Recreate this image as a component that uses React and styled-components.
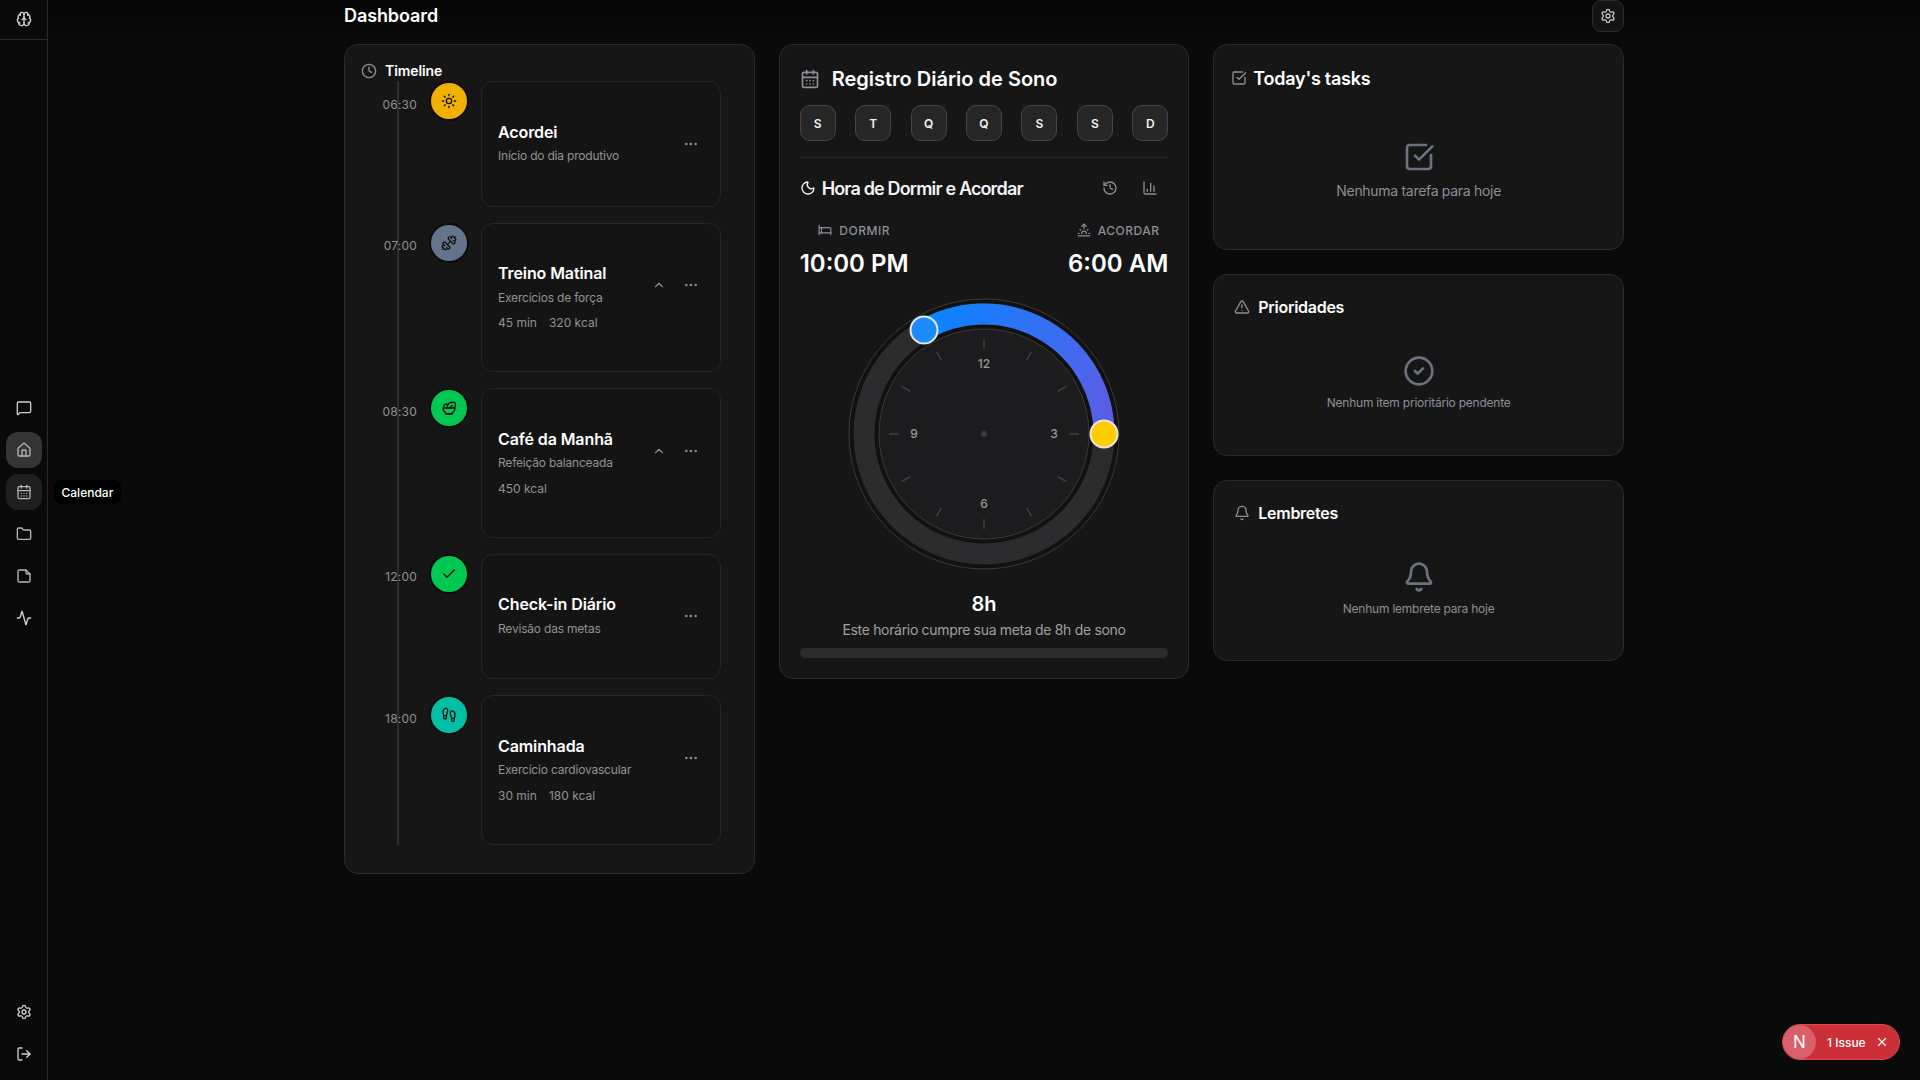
import React from 'react'
import styled, { createGlobalStyle } from 'styled-components'
import {
  Activity, Bed, Bell, Brain, CalendarDays, ChartColumn, Check, ChevronUp, CircleCheck, Clock,
  Dumbbell, Ellipsis, Folder, Footprints, History, House, LogOut, MessageSquare, Moon, Salad,
  Settings, SquareCheckBig, Sun, Sunrise, TriangleAlert, X,
} from 'lucide-react'

const GlobalStyle = createGlobalStyle`
  html, body { margin: 0; padding: 0; background: #0a0a0a; }
  body { font-family: Inter, "Liberation Sans", sans-serif; color: #fff; }
  * { box-sizing: border-box; }
`

const Shell = styled.div`
  display: flex;
  height: 1080px;
  overflow: hidden;
  background: #0a0a0a;
`

const Sidebar = styled.aside`
  flex: 0 0 48px;
  display: flex;
  flex-direction: column;
  align-items: center;
  border-right: 1px solid #2a2a2a;
`

const LogoBox = styled.div`
  width: 47px;
  height: 40px;
  flex: none;
  display: flex;
  align-items: center;
  justify-content: center;
  padding-bottom: 2px;
  border-bottom: 1px solid #2a2a2a;
  color: #d4d4d4;
`

const NavGroup = styled.nav`
  flex: ${p => (p.$grow ? 1 : 'none')};
  display: flex;
  flex-direction: column;
  justify-content: center;
  gap: 6px;
  padding: ${p => (p.$grow ? 0 : '8px 0')};
`

const NavItem = styled.div`
  position: relative;
  width: 36px;
  height: 36px;
  display: flex;
  align-items: center;
  justify-content: center;
  border-radius: 12px;
  color: ${p => (p.$state ? '#b5b5b5' : '#cfcfcf')};
  background: ${p => (p.$state === 'active' ? '#353535' : p.$state === 'hover' ? '#1f1f1f' : 'transparent')};
`

const Tooltip = styled.div`
  position: absolute;
  left: 48px;
  top: 6px;
  height: 24px;
  padding: 0 8px;
  display: flex;
  align-items: center;
  border-radius: 7px;
  background: #000;
  color: #fff;
  font-size: 12px;
  font-weight: 500;
  white-space: nowrap;
`

const Main = styled.main`
  flex: 1;
  display: flex;
  justify-content: center;
  background: linear-gradient(#050505, #0a0a0a 44px);
`

const Content = styled.div`
  width: 1280px;
`

const TopBar = styled.header`
  height: 32px;
  margin-bottom: 12px;
  display: flex;
  align-items: center;
  justify-content: space-between;
`

const PageTitle = styled.h1`
  margin: 0;
  font-size: 18px;
  line-height: 32px;
  font-weight: 600;
  letter-spacing: -0.1px;
`

const SettingsButton = styled.button`
  width: 32px;
  height: 32px;
  padding: 0;
  display: flex;
  align-items: center;
  justify-content: center;
  background: #141414;
  border: 1px solid #2a2a2a;
  border-radius: 9px;
  color: #c8c8c8;
`

const Columns = styled.div`
  display: grid;
  grid-template-columns: repeat(3, 1fr);
  gap: 24px;
  align-items: start;
`

const Stack = styled.div`
  display: flex;
  flex-direction: column;
  gap: 24px;
`

const Panel = styled.section`
  background: #161616;
  border: 1px solid #2a2a2a;
  border-radius: 14px;
  padding: ${p => p.$padding || '20px'};
`

const TimelineHead = styled.div`
  height: 20px;
  display: flex;
  align-items: center;
  gap: 8px;
  color: #8b8f98;
  font-size: 14px;
  line-height: 20px;
  font-weight: 600;
  letter-spacing: -0.1px;
  & > span { color: #fff; }
`

const TimelineList = styled.div`
  position: relative;
  display: flex;
  flex-direction: column;
  gap: 16px;
`

const Rail = styled.div`
  position: absolute;
  left: 36px;
  top: 0;
  bottom: 0;
  width: 2px;
  background: #2e2e2e;
`

const Row = styled.div`
  display: flex;
  align-items: flex-start;
`

const Time = styled.div`
  position: relative;
  width: 56px;
  margin-top: 15.6px;
  text-align: right;
  font-size: 12px;
  line-height: 16px;
  letter-spacing: 0.2px;
  color: #929292;
`

const Dot = styled.div`
  flex: none;
  width: 36px;
  height: 36px;
  margin: 2px 14px 0;
  display: flex;
  align-items: center;
  justify-content: center;
  border-radius: 50%;
  background: ${p => p.$color};
  box-shadow: 0 0 0 2px #0d0d0d;
  color: #111;
`

const ItemCard = styled.article`
  width: 240px;
  display: flex;
  flex-direction: column;
  padding: 37.75px 16px;
  background: #141414;
  border: 1px solid #262626;
  border-radius: 12px;
`

const ItemTop = styled.div`
  display: flex;
  align-items: center;
  justify-content: space-between;
`

const ItemText = styled.div`
  padding-bottom: 3.5px;
`

const ItemTitle = styled.div`
  font-size: 16px;
  line-height: 24px;
  font-weight: 600;
  letter-spacing: -0.1px;
`

const ItemSub = styled.div`
  margin-top: 4.5px;
  font-size: 12px;
  line-height: 16px;
  letter-spacing: -0.2px;
  color: #929292;
`

const Meta = styled.div`
  margin: 6px 0 2px;
  display: flex;
  gap: 12px;
  font-size: 12px;
  line-height: 16px;
  color: #929292;
`

const Actions = styled.div`
  display: flex;
  align-items: center;
  gap: 17px;
  padding-right: 5px;
  color: #8a8a8a;
`

const SleepHead = styled.div`
  height: 28px;
  display: flex;
  align-items: center;
  gap: 12px;
  color: #8b8f98;
  & > h2 {
    margin: 0;
    color: #fff;
    font-size: 20px;
    font-weight: 600;
  }
`

const Days = styled.div`
  display: flex;
  justify-content: space-between;
  margin-top: 12px;
  padding-bottom: 16px;
  border-bottom: 1px solid #262626;
`

const Day = styled.div`
  width: 36px;
  height: 36px;
  display: flex;
  align-items: center;
  justify-content: center;
  background: #262626;
  border: 1px solid #454545;
  border-radius: 10px;
  font-size: 12px;
  font-weight: 600;
  color: #f2f2f2;
`

const SubHead = styled.div`
  height: 32px;
  margin-top: 14px;
  display: flex;
  align-items: center;
  justify-content: space-between;
`

const SubTitle = styled.div`
  display: flex;
  align-items: center;
  gap: 6px;
  font-size: 18px;
  font-weight: 600;
  letter-spacing: -0.85px;
  color: #f4f4f4;
`

const IconButtons = styled.div`
  display: flex;
  gap: 8px;
  padding-right: 2px;
  color: #8e8e8e;
  & > span {
    width: 32px;
    height: 32px;
    display: flex;
    align-items: center;
    justify-content: center;
  }
`

const TimesRow = styled.div`
  display: flex;
  justify-content: space-between;
  margin-top: 16px;
`

const TimeBlock = styled.div`
  display: flex;
  flex-direction: column;
  align-items: center;
  gap: 8px;
`

const TimeLabel = styled.div`
  height: 20px;
  display: flex;
  align-items: center;
  gap: 7px;
  font-size: 12px;
  font-weight: 500;
  letter-spacing: 0.5px;
  color: #8b8f98;
`

const TimeValue = styled.div`
  font-size: 24px;
  line-height: 32px;
  font-weight: 600;
`

const ClockFace = styled.svg`
  display: block;
  margin: 14px auto 0;
`

const Duration = styled.div`
  margin-top: 16px;
  text-align: center;
  font-size: 20px;
  line-height: 28px;
  font-weight: 600;
`

const DurationNote = styled.div`
  margin-top: 2px;
  text-align: center;
  font-size: 14px;
  line-height: 20px;
  letter-spacing: -0.32px;
  color: #a0a0a0;
`

const Progress = styled.div`
  height: 10px;
  margin-top: 8px;
  border-radius: 5px;
  background: #2c2c2e;
`

const CardHead = styled.div`
  display: flex;
  align-items: center;
  gap: ${p => (p.$large ? '6px' : '8px')};
  height: ${p => (p.$large ? '28px' : '24px')};
  color: #8b8f98;
  & > h3 {
    margin: 0;
    color: #fff;
    font-size: ${p => (p.$large ? '18px' : '16px')};
    font-weight: 600;
    letter-spacing: ${p => (p.$large ? '-0.25px' : '-0.28px')};
  }
`

const Empty = styled.div`
  display: flex;
  flex-direction: column;
  align-items: center;
  gap: 8px;
  padding: ${p => (p.$large ? '49px 0 28px' : '36px 0 23.5px')};
  color: #6b7280;
  & > p {
    margin: 0;
    color: #8b8f98;
    font-size: ${p => (p.$large ? '14px' : '12px')};
    line-height: ${p => (p.$large ? '20px' : '16px')};
    letter-spacing: ${p => (p.$large ? '-0.3px' : '-0.23px')};
  }
`

const IssueBadge = styled.div`
  position: fixed;
  right: 20px;
  bottom: 20px;
  width: 118px;
  height: 36px;
  display: flex;
  align-items: center;
  background: #cc2f37;
  border: 1px solid #dd4a50;
  border-radius: 18px;
  font-size: 12px;
  font-weight: 500;
  color: #fff;
`

const IssueLogo = styled.span`
  width: 33px;
  height: 34px;
  margin-right: 11px;
  display: flex;
  align-items: center;
  justify-content: center;
  border-radius: 50%;
  background: #d7606a;
  font-size: 17px;
  font-weight: 400;
`

const IssueClose = styled.span`
  display: flex;
  margin-left: 9px;
`

const FoldedFile = () => (
  <svg width="16" height="16" viewBox="0 0 24 24" fill="none" stroke="currentColor" strokeWidth="2" strokeLinecap="round" strokeLinejoin="round">
    <path d="M5 3h10l6 6v10a2 2 0 0 1-2 2H5a2 2 0 0 1-2-2V5a2 2 0 0 1 2-2z" />
    <path d="M15 3v4a2 2 0 0 0 2 2h4" />
  </svg>
)

const timeline = [
  { time: '06:30', color: '#f0b000', Icon: Sun, title: 'Acordei', sub: 'Início do dia produtivo' },
  { time: '07:00', color: '#64748b', Icon: Dumbbell, title: 'Treino Matinal', sub: 'Exercícios de força', meta: ['45 min', '320 kcal'], open: true },
  { time: '08:30', color: '#00c853', Icon: Salad, title: 'Café da Manhã', sub: 'Refeição balanceada', meta: ['450 kcal'], open: true },
  { time: '12:00', color: '#00c853', Icon: Check, title: 'Check-in Diário', sub: 'Revisão das metas' },
  { time: '18:00', color: '#00bfa5', Icon: Footprints, title: 'Caminhada', sub: 'Exercício cardiovascular', meta: ['30 min', '180 kcal'] },
]

const hours = Array.from({ length: 12 }, (_, i) => i)

function SleepClock() {
  return (
    <ClockFace width="280" height="280" viewBox="0 0 280 280">
      <defs>
        <linearGradient id="sleepArc" x1="80" y1="36" x2="260" y2="140" gradientUnits="userSpaceOnUse">
          <stop offset="0" stopColor="#0a84ff" />
          <stop offset="1" stopColor="#5e5ce6" />
        </linearGradient>
      </defs>
      <circle cx="140" cy="140" r="135" fill="#111" stroke="#3a3a3a" />
      <circle cx="140" cy="140" r="120" fill="none" stroke="#2c2c2e" strokeWidth="21" />
      <circle cx="140" cy="140" r="105" fill="#1c1c1e" stroke="#3a3a3a" />
      {hours.map(h => {
        const a = (h * Math.PI) / 6
        return (
          <line
            key={h}
            x1={140 + 85 * Math.sin(a)}
            y1={140 - 85 * Math.cos(a)}
            x2={140 + 95 * Math.sin(a)}
            y2={140 - 95 * Math.cos(a)}
            stroke="#3f3f41"
            strokeWidth="1.5"
          />
        )
      })}
      <g fill="#9a9a9a" fontSize="12" fontWeight="500" textAnchor="middle" fontFamily="Inter, sans-serif">
        <text x="140" y="74">12</text>
        <text x="210" y="144">3</text>
        <text x="140" y="214">6</text>
        <text x="70" y="144">9</text>
      </g>
      <circle cx="140" cy="140" r="3" fill="#38383a" />
      <path d="M80 36.1A120 120 0 0 1 260 140" fill="none" stroke="url(#sleepArc)" strokeWidth="21" />
      <circle cx="80" cy="36.1" r="13.5" fill="#1a8cff" stroke="#e8e8e8" strokeWidth="2" />
      <circle cx="260" cy="140" r="13.5" fill="#ffcc00" stroke="#e8e8e8" strokeWidth="2" />
    </ClockFace>
  )
}

export default function App() {
  return (
    <Shell>
      <GlobalStyle />
      <Sidebar>
        <LogoBox><Brain size={16} /></LogoBox>
        <NavGroup $grow>
          <NavItem><MessageSquare size={16} /></NavItem>
          <NavItem $state="active"><House size={16} /></NavItem>
          <NavItem $state="hover">
            <CalendarDays size={16} />
            <Tooltip>Calendar</Tooltip>
          </NavItem>
          <NavItem $state="idle"><Folder size={16} /></NavItem>
          <NavItem $state="idle"><FoldedFile /></NavItem>
          <NavItem><Activity size={16} /></NavItem>
        </NavGroup>
        <NavGroup>
          <NavItem><Settings size={16} /></NavItem>
          <NavItem><LogOut size={16} /></NavItem>
        </NavGroup>
      </Sidebar>

      <Main>
        <Content>
          <TopBar>
            <PageTitle>Dashboard</PageTitle>
            <SettingsButton><Settings size={16} /></SettingsButton>
          </TopBar>

          <Columns>
            <Panel $padding="16px 16px 28px">
              <TimelineHead><Clock size={16} /><span>Timeline</span></TimelineHead>
              <TimelineList>
                <Rail />
                {timeline.map(item => (
                  <Row key={item.time}>
                    <Time>{item.time}</Time>
                    <Dot $color={item.color}><item.Icon size={16} /></Dot>
                    <ItemCard>
                      <ItemTop>
                        <ItemText>
                          <ItemTitle>{item.title}</ItemTitle>
                          <ItemSub>{item.sub}</ItemSub>
                        </ItemText>
                        <Actions>
                          {item.open && <ChevronUp size={14} />}
                          <Ellipsis size={16} />
                        </Actions>
                      </ItemTop>
                      {item.meta && (
                        <Meta>{item.meta.map(m => <span key={m}>{m}</span>)}</Meta>
                      )}
                    </ItemCard>
                  </Row>
                ))}
              </TimelineList>
            </Panel>

            <Panel>
              <SleepHead><CalendarDays size={20} /><h2>Registro Diário de Sono</h2></SleepHead>
              <Days>
                {['S', 'T', 'Q', 'Q', 'S', 'S', 'D'].map((d, i) => <Day key={i}>{d}</Day>)}
              </Days>
              <SubHead>
                <SubTitle><Moon size={16} />Hora de Dormir e Acordar</SubTitle>
                <IconButtons>
                  <span><History size={16} /></span>
                  <span><ChartColumn size={16} /></span>
                </IconButtons>
              </SubHead>
              <TimesRow>
                <TimeBlock>
                  <TimeLabel><Bed size={14} />DORMIR</TimeLabel>
                  <TimeValue>10:00 PM</TimeValue>
                </TimeBlock>
                <TimeBlock>
                  <TimeLabel><Sunrise size={14} />ACORDAR</TimeLabel>
                  <TimeValue>6:00 AM</TimeValue>
                </TimeBlock>
              </TimesRow>
              <SleepClock />
              <Duration>8h</Duration>
              <DurationNote>Este horário cumpre sua meta de 8h de sono</DurationNote>
              <Progress />
            </Panel>

            <Stack>
              <Panel $padding="19px 17px 20px">
                <CardHead $large><SquareCheckBig size={16} /><h3>Today's tasks</h3></CardHead>
                <Empty $large>
                  <SquareCheckBig size={32} />
                  <p>Nenhuma tarefa para hoje</p>
                </Empty>
              </Panel>
              <Panel>
                <CardHead><TriangleAlert size={16} /><h3>Prioridades</h3></CardHead>
                <Empty>
                  <CircleCheck size={32} />
                  <p>Nenhum item prioritário pendente</p>
                </Empty>
              </Panel>
              <Panel>
                <CardHead><Bell size={16} /><h3>Lembretes</h3></CardHead>
                <Empty>
                  <Bell size={32} />
                  <p>Nenhum lembrete para hoje</p>
                </Empty>
              </Panel>
            </Stack>
          </Columns>
        </Content>
      </Main>

      <IssueBadge>
        <IssueLogo>N</IssueLogo>
        1 Issue
        <IssueClose><X size={14} /></IssueClose>
      </IssueBadge>
    </Shell>
  )
}
